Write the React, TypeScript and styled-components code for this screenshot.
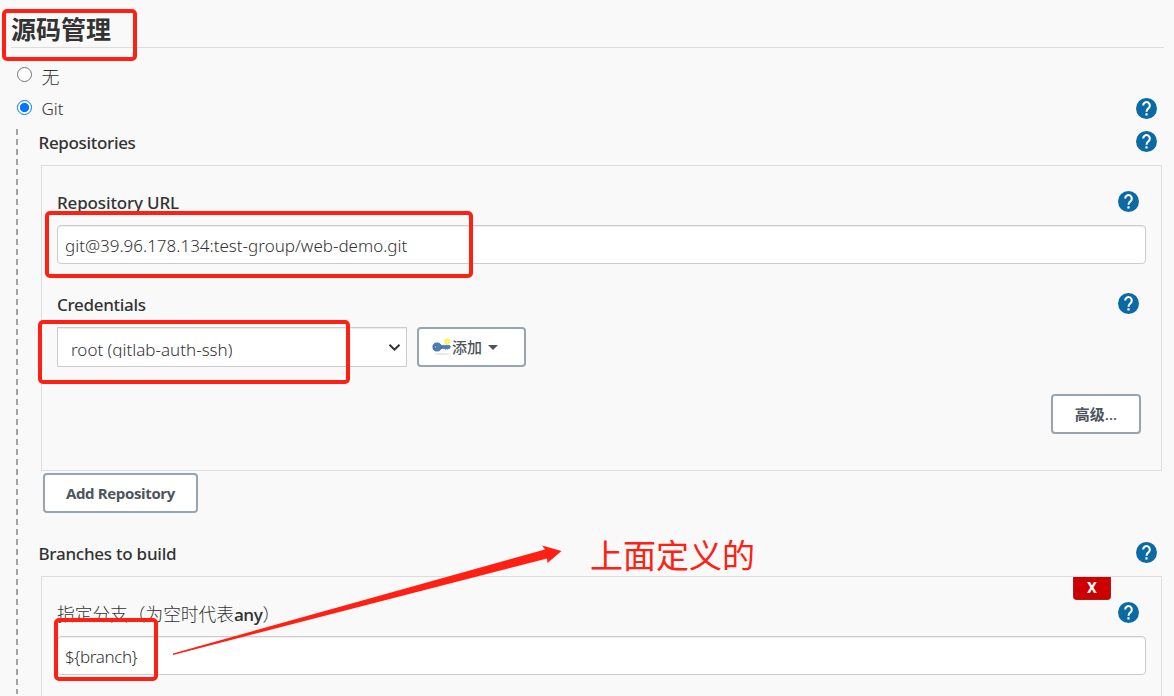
import React from "react";
import styled, { createGlobalStyle } from "styled-components";

const GlobalStyle = createGlobalStyle`
  * { box-sizing: border-box; }
  html, body { margin: 0; background: #f9f9f9; overflow: hidden; }
  body, button {
    font-family: "Open Sans", "Noto Sans CJK SC", sans-serif;
    color: #333;
  }
`;

const Page = styled.main`
  position: relative;
  width: 1174px;
  height: 696px;
  overflow: hidden;
  background: #f9f9f9;
  font-size: 17px;
`;

const SectionTitle = styled.h1`
  margin: 0 10px 0 11px;
  height: 48px;
  padding-top: 11px;
  border-bottom: 1px solid #ddd;
  font-size: 25px;
  line-height: 37px;
  font-weight: 700;
`;

const Option = styled.div<{ $height: number; $top?: number }>`
  display: flex;
  align-items: center;
  height: ${(p) => p.$height}px;
  padding: ${(p) => p.$top ?? 0}px 17px 0 17px;
`;

const Radio = styled.span<{ $checked?: boolean }>`
  width: 15px;
  height: 15px;
  flex: none;
  margin: 0 9.5px 2px 0;
  border: 1px solid ${(p) => (p.$checked ? "#0075ff" : "#767676")};
  border-radius: 50%;
  background: ${(p) => (p.$checked ? "radial-gradient(circle, #0075ff 4.2px, #fff 5px)" : "#fff")};
`;

const Spacer = styled.span`
  flex: 1;
`;

const Text = styled.span<{ $spacing?: number; $weight?: number; $size?: number }>`
  white-space: pre;
  letter-spacing: ${(p) => p.$spacing ?? 0}px;
  font-weight: ${(p) => p.$weight ?? 300};
  font-size: ${(p) => p.$size ?? 17}px;
`;

const Value = styled(Text)`
  font-family: "Noto Sans", sans-serif;
  font-weight: 350;
`;

const Label = styled(Text)`
  padding-top: 2px;
  font-family: "Noto Sans", "Noto Sans CJK SC", sans-serif;
  font-weight: 500;
`;

const Nested = styled.section`
  display: flex;
  height: 567px;
  margin-top: 8px;
  padding: 0 12px 0 16px;
`;

const Rail = styled.div`
  width: 2px;
  flex: none;
  margin-top: 2px;
  background: repeating-linear-gradient(#a3a3a3 0 6px, transparent 6px 10px);
`;

const Fields = styled.div`
  flex: 1;
  padding-left: 20.5px;
`;

const GroupHeader = styled.div<{ $height: number; $bottom: number }>`
  display: flex;
  align-items: center;
  justify-content: space-between;
  height: ${(p) => p.$height}px;
  padding: 0 5px ${(p) => p.$bottom}px 0;
`;

const Panel = styled.div<{ $height: number }>`
  height: ${(p) => p.$height}px;
  margin-left: 2.5px;
  padding: 0 15px;
  border: 1px solid #ddd;
`;

const FieldLabel = styled.div<{ $top: number }>`
  display: flex;
  align-items: center;
  justify-content: space-between;
  height: 21px;
  margin-top: ${(p) => p.$top}px;
  margin-bottom: 13px;
  padding-right: 7px;
`;

const Input = styled.div`
  display: flex;
  align-items: center;
  height: 39px;
  padding: 2px 7px 0;
  border: 1px solid #ccc;
  border-radius: 4px;
  background: #fff;
  box-shadow: inset 0 1px 1px rgba(0, 0, 0, 0.075);
`;

const ControlRow = styled.div`
  display: flex;
  gap: 10px;
`;

const Select = styled.div`
  display: flex;
  align-items: center;
  justify-content: space-between;
  width: 350px;
  height: 40px;
  padding: 0 5px 0 13px;
  border: 1px solid #ccc;
  background: #fff;
  box-shadow: inset 0 1px 1px rgba(0, 0, 0, 0.075);
`;

const SelectedValue = styled.div`
  display: flex;
  height: 20px;
  margin-top: 2px;
  overflow: hidden;
  line-height: 23px;
`;

const Button = styled.button<{ $width: number }>`
  display: flex;
  align-items: center;
  justify-content: center;
  width: ${(p) => p.$width}px;
  height: 40px;
  padding: 0;
  border: 2px solid #98a5ae;
  border-radius: 4px;
  background: #fff;
  color: #4d545d;
`;

const AddButton = styled(Button)`
  justify-content: flex-start;
  padding: 0 0 1px 13px;
`;

const AdvancedButton = styled(Button)`
  padding-bottom: 2px;
`;

const ActionRow = styled.div`
  display: flex;
  justify-content: flex-end;
  margin-top: 27px;
  padding-right: 5px;
`;

const RepositoryRow = styled.div`
  padding: 2px 0 0 4.5px;
  height: 68px;
`;

const DeleteRow = styled.div`
  display: flex;
  justify-content: flex-end;
  height: 23px;
  padding-right: 35px;
`;

const DeleteButton = styled.button`
  width: 38px;
  height: 23px;
  padding: 0;
  border: 1px solid #b31a10;
  border-top: 0;
  border-radius: 0 0 4px 4px;
  background: #c00;
  color: #fff;
  font-family: Roboto, sans-serif;
  font-size: 15.5px;
  font-weight: 700;
  line-height: 23px;
`;

const Highlight = styled.div<{ $x: number; $y: number; $w: number; $h: number }>`
  position: absolute;
  left: ${(p) => p.$x}px;
  top: ${(p) => p.$y}px;
  width: ${(p) => p.$w}px;
  height: ${(p) => p.$h}px;
  border: 4px solid #ff2013;
  border-radius: 5px;
`;

const Arrow = styled.svg`
  position: absolute;
  left: 170px;
  top: 540px;
`;

const Note = styled.div`
  position: absolute;
  left: 590px;
  top: 532px;
  color: #ff2013;
  font-size: 33px;
  line-height: 48px;
  font-weight: 400;
  white-space: nowrap;
`;

const HelpSvg = styled.svg`
  display: block;
  flex: none;
`;

const Help = () => (
  <HelpSvg width="21" height="21" viewBox="0 0 21 21">
    <circle cx="10.5" cy="10.5" r="10.5" fill="#0b6aa2" />
    <path d="M7.2 7.4a3.3 3.4 0 1 1 5.4 2.7c-1.3 1-2.1 1.7-2.1 3.6" fill="none" stroke="#fff" strokeWidth="2.1" />
    <rect x="9.4" y="15.3" width="2.2" height="2.2" fill="#fff" />
  </HelpSvg>
);

const KeyIcon = () => (
  <svg width="20" height="20" viewBox="0 0 20 20">
    <ellipse cx="10" cy="17" rx="8" ry="1" fill="#e8e8e8" />
    <circle cx="15.2" cy="4.6" r="3" fill="#fff54a" />
    <circle cx="15.2" cy="4.6" r="1" fill="#fffbd0" />
    <path d="M8.5 8.4h9l1 1.2-1 1.8h-1.2l-.6 1-1-1-1 1-1.2-1H8.5z" fill="#4c7fbd" stroke="#38689f" strokeWidth=".7" />
    <circle cx="5" cy="10" r="4.1" fill="#4c7fbd" stroke="#38689f" strokeWidth=".8" />
    <circle cx="3.6" cy="10" r="1.1" fill="#e0dcc0" stroke="#24466f" strokeWidth=".5" />
  </svg>
);

const Caret = styled.span`
  margin: 1px 0 0 6px;
  border: 5.5px solid transparent;
  border-top-color: #4d545d;
  border-bottom: 0;
`;

export default function App() {
  return (
    <Page>
      <GlobalStyle />
      <SectionTitle>源码管理</SectionTitle>
      <Option $height={50} $top={5}>
        <Radio />
        <Text $size={18}>无</Text>
      </Option>
      <Option $height={21}>
        <Radio $checked />
        <Value>Git</Value>
        <Spacer />
        <Help />
      </Option>
      <Nested>
        <Rail />
        <Fields>
          <GroupHeader $height={38} $bottom={9}>
            <Label $spacing={-0.33}>Repositories</Label>
            <Help />
          </GroupHeader>
          <Panel $height={306}>
            <FieldLabel $top={25}>
              <Label $spacing={-0.15}>Repository URL</Label>
              <Help />
            </FieldLabel>
            <Input>
              <Value>git@39.96.178.134:test-group/web-demo.git</Value>
            </Input>
            <FieldLabel $top={29}>
              <Label $spacing={-0.3}>Credentials</Label>
              <Help />
            </FieldLabel>
            <ControlRow>
              <Select>
                <SelectedValue>
                  <Value>root (gitlab-auth-ssh)</Value>
                </SelectedValue>
                <svg width="13" height="10" viewBox="0 0 13 10">
                  <path d="M1.5 2.7l5 5 5-5" fill="none" stroke="#333" strokeWidth="2" />
                </svg>
              </Select>
              <AddButton $width={109}>
                <KeyIcon />
                <Text $weight={500} $size={15}>添加</Text>
                <Caret />
              </AddButton>
            </ControlRow>
            <ActionRow>
              <AdvancedButton $width={90}>
                <Text $weight={600} $size={15}>高级...</Text>
              </AdvancedButton>
            </ActionRow>
          </Panel>
          <RepositoryRow>
            <Button $width={155}>
              <Text $weight={700} $size={15} $spacing={-0.35}>Add Repository</Text>
            </Button>
          </RepositoryRow>
          <GroupHeader $height={37} $bottom={10}>
            <Label $spacing={-0.25}>Branches to build</Label>
            <Help />
          </GroupHeader>
          <Panel $height={140}>
            <DeleteRow>
              <DeleteButton>X</DeleteButton>
            </DeleteRow>
            <FieldLabel $top={2}>
              <span>
                <Text $size={17.7}>指定分支（为空时代表</Text>
                <Text $weight={600} $spacing={-0.4}>any</Text>
                <Text $size={17.7}>）</Text>
              </span>
              <Help />
            </FieldLabel>
            <Input>
              <Value $spacing={-0.4}>{"${branch}"}</Value>
            </Input>
          </Panel>
        </Fields>
      </Nested>

      <Highlight $x={2} $y={9} $w={135} $h={52} />
      <Highlight $x={45} $y={211} $w={428} $h={67} />
      <Highlight $x={38} $y={320} $w={312} $h={64} />
      <Highlight $x={54} $y={618} $w={104} $h={63} />
      <Arrow width="400" height="120" viewBox="170 540 400 120">
        <path d="M173 653.5L545 549.5L542 545.5L561.5 551L547.5 563L547 558.5L173 655Z" fill="#ff2013" />
      </Arrow>
      <Note>上面定义的</Note>
    </Page>
  );
}
